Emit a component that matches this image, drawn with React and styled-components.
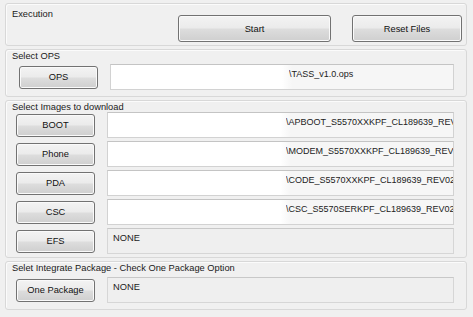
import React from 'react';
import styled, { createGlobalStyle } from 'styled-components';

const images = [
  { name: 'BOOT', path: '\\APBOOT_S5570XXKPF_CL189639_REV02_user_low_ship.tar.md5' },
  { name: 'Phone', path: '\\MODEM_S5570XXKPF_CL189639_REV02_user_low_ship.tar.md5' },
  { name: 'PDA', path: '\\CODE_S5570XXKPF_CL189639_REV02_user_low_ship.tar.md5' },
  { name: 'CSC', path: '\\CSC_S5570SERKPF_CL189639_REV02_user_low_ship.tar.md5' },
  { name: 'EFS' },
];

const App = () => {
  return (
    <>
      <GlobalStyle />
      <Window>
        <Group $height={43}>
          <ExecRow>
            <Label>Execution</Label>
            <ExecButtons>
              <Button $width={153} $height={27}>Start</Button>
              <Button $width={110} $height={27}>Reset Files</Button>
            </ExecButtons>
          </ExecRow>
        </Group>

        <Group $height={48}>
          <Label>Select OPS</Label>
          <Rows $offset={2}>
            <Row $indent={13}>
              <Button>OPS</Button>
              <PathField path="\TASS_v1.0.ops" />
            </Row>
          </Rows>
        </Group>

        <Group $height={158}>
          <Label>Select Images to download</Label>
          <Rows $offset={-1}>
            {images.map((img) => (
              <Row key={img.name} $indent={10}>
                <Button>{img.name}</Button>
                {img.path ? <PathField path={img.path} /> : <EmptyField>NONE</EmptyField>}
              </Row>
            ))}
          </Rows>
        </Group>

        <Group $height={49}>
          <Label>Selet Integrate Package - Check One Package Option</Label>
          <Rows $offset={3}>
            <Row $indent={10}>
              <Button>One Package</Button>
              <EmptyField>NONE</EmptyField>
            </Row>
          </Rows>
        </Group>
      </Window>
    </>
  );
};

const PathField = ({ path }) => (
  <Field>
    <PathText>{path}</PathText>
  </Field>
);

const GlobalStyle = createGlobalStyle`
  body {
    margin: 0;
    background: #f0f0f0;
    font-family: "Liberation Sans", Arial, sans-serif;
    font-size: 9.3px;
    color: #1a1a1a;
  }
`;

const Window = styled.div`
  width: 473px;
  height: 317px;
  box-sizing: border-box;
  padding: 3px 6px 0 5px;
  display: flex;
  flex-direction: column;
  gap: 3px;
  background: #f0f0f0;
`;

const Group = styled.div`
  height: ${(p) => p.$height}px;
  box-sizing: border-box;
  border: 1px solid #d8d8d8;
  border-radius: 3px;
  box-shadow: inset 1px 1px 0 #fbfbfb;
  display: flex;
  flex-direction: column;
`;

const Label = styled.div`
  padding-left: 6px;
  line-height: 12px;
  white-space: nowrap;
`;

const ExecRow = styled.div`
  display: flex;
  justify-content: space-between;
  padding-top: 4px;
`;

const ExecButtons = styled.div`
  display: flex;
  gap: 21px;
  padding: 7px 4px 0 0;
`;

const Rows = styled.div`
  display: flex;
  flex-direction: column;
  gap: 3px;
  margin-top: ${(p) => p.$offset}px;
`;

const Row = styled.div`
  display: flex;
  align-items: center;
  gap: 12px;
  padding-left: ${(p) => p.$indent}px;
  padding-right: 12px;
`;

const Button = styled.div`
  width: ${(p) => p.$width || 79}px;
  height: ${(p) => p.$height || 23}px;
  flex-shrink: 0;
  box-sizing: border-box;
  border: 1px solid #727272;
  border-radius: 3px;
  background: linear-gradient(#f3f3f3 0%, #ebebeb 48%, #dddddd 52%, #cfcfcf 100%);
  box-shadow: inset 0 0 0 1px #fafafa;
  display: flex;
  align-items: center;
  justify-content: center;
  color: #111;
  white-space: nowrap;
`;

const Field = styled.div`
  flex: 1;
  min-width: 0;
  height: 26px;
  box-sizing: border-box;
  border: 1px solid #d2d2d2;
  border-top-color: #c4c4c4;
  background: linear-gradient(90deg, #ffffff 0%, #ffffff 50%, #f6f6f6 53%, #f6f6f6 100%);
  overflow: hidden;
  padding: 4px 0 0 178px;
`;

const PathText = styled.div`
  white-space: nowrap;
  overflow: hidden;
  font-size: 9px;
  color: #222;
`;

const EmptyField = styled.div`
  flex: 1;
  height: 26px;
  box-sizing: border-box;
  border: 1px solid #d6d6d6;
  border-top-color: #c8c8c8;
  background: #efefef;
  padding: 4px 0 0 5px;
  color: #222;
`;

export default App;
